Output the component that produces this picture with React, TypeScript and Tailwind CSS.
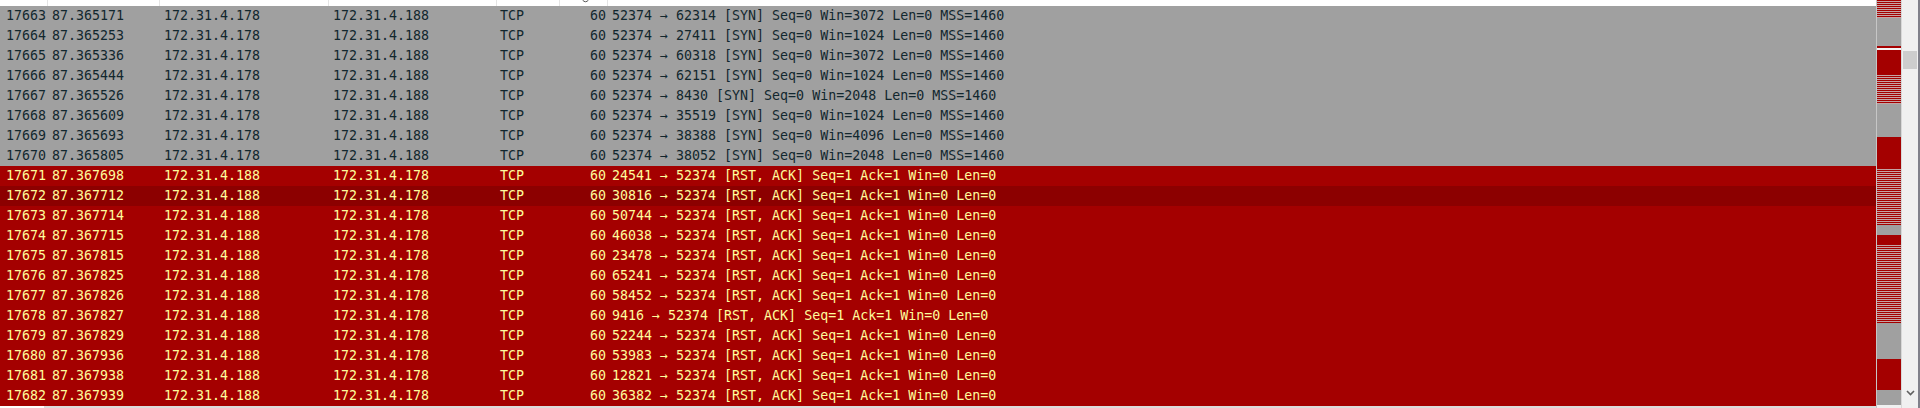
import React from "react";

type Pkt = { no: number; time: string; src: string; dst: string; info: string; kind: "syn" | "rst" | "sel" };

const SYN: [number, string, string, string][] = [
  [17663, "87.365171", "62314", "3072"],
  [17664, "87.365253", "27411", "1024"],
  [17665, "87.365336", "60318", "3072"],
  [17666, "87.365444", "62151", "1024"],
  [17667, "87.365526", "8430", "2048"],
  [17668, "87.365609", "35519", "1024"],
  [17669, "87.365693", "38388", "4096"],
  [17670, "87.365805", "38052", "2048"],
];

const RST: [number, string, string][] = [
  [17671, "87.367698", "24541"],
  [17672, "87.367712", "30816"],
  [17673, "87.367714", "50744"],
  [17674, "87.367715", "46038"],
  [17675, "87.367815", "23478"],
  [17676, "87.367825", "65241"],
  [17677, "87.367826", "58452"],
  [17678, "87.367827", "9416"],
  [17679, "87.367829", "52244"],
  [17680, "87.367936", "53983"],
  [17681, "87.367938", "12821"],
  [17682, "87.367939", "36382"],
];

const packets: Pkt[] = [
  ...SYN.map(([no, time, port, win]) => ({
    no,
    time,
    src: "172.31.4.178",
    dst: "172.31.4.188",
    info: `52374 → ${port} [SYN] Seq=0 Win=${win} Len=0 MSS=1460`,
    kind: "syn" as const,
  })),
  ...RST.map(([no, time, port]) => ({
    no,
    time,
    src: "172.31.4.188",
    dst: "172.31.4.178",
    info: `${port} → 52374 [RST, ACK] Seq=1 Ack=1 Win=0 Len=0`,
    kind: (no === 17672 ? "sel" : "rst") as "sel" | "rst",
  })),
];

const rowCls = {
  syn: "bg-[#a0a0a0] text-[#12272e]",
  rst: "bg-[#a40000] text-[#fffc9c]",
  sel: "bg-[#8c0000] text-[#fffc9c]",
};

const cols = "grid grid-cols-[48px_112px_169px_168px_63px_48px_1fr]";

// minimap segments: [top, bottom, type]
const mini: [number, number, "s" | "g" | "r" | "w"][] = [
  [0, 18, "s"],
  [18, 46, "g"],
  [46, 48, "r"],
  [48, 50, "w"],
  [50, 74, "r"],
  [74, 104, "s"],
  [104, 137, "g"],
  [137, 169, "r"],
  [169, 225, "s"],
  [225, 235, "g"],
  [235, 245, "r"],
  [245, 323, "s"],
  [323, 359, "g"],
  [359, 390, "r"],
  [390, 405, "g"],
];

function MiniMap() {
  return (
    <svg width="24" height="408" className="block">
      <defs>
        <pattern id="stripe" width="24" height="2" patternUnits="userSpaceOnUse">
          <rect width="24" height="1" fill="#a40000" />
          <rect y="1" width="24" height="1" fill="#c4a4a4" />
        </pattern>
      </defs>
      <rect width="24" height="408" fill="#f0f0f0" />
      {mini.map(([a, b, t]) => (
        <rect
          key={a}
          y={a}
          width="24"
          height={b - a}
          fill={t === "s" ? "url(#stripe)" : t === "g" ? "#a0a0a0" : t === "r" ? "#a40000" : "#f4f4f4"}
        />
      ))}
    </svg>
  );
}

export default function App() {
  return (
    <div className="flex h-[408px] w-[1920px] overflow-hidden bg-white font-['DejaVu_Sans_Mono',monospace] text-[13.3px] leading-[20px]">
      <div className="flex w-[1876px] flex-col">
        <div className={`${cols} h-[6px] bg-white`}>
          <div className="border-r border-[#e5e5e5]" />
          <div className="border-r border-[#e5e5e5]" />
          <div className="border-r border-[#e5e5e5]" />
          <div className="border-r border-[#e5e5e5]" />
          <div className="border-r border-[#e5e5e5]" />
          <div className="relative border-r border-[#e5e5e5]">
            <svg width="7" height="3" className="absolute left-[22px] top-0">
              <path d="M0.5 0 Q3.5 3.5 6.5 0" stroke="#555" strokeWidth="1" fill="none" />
            </svg>
          </div>
          <div />
        </div>
        {packets.map((p) => (
          <div key={p.no} className={`${cols} h-[20px] whitespace-pre ${rowCls[p.kind]}`}>
            <div className="pr-[2px] text-right">{p.no}</div>
            <div className="pl-[4px]">{p.time}</div>
            <div className="pl-[4px]">{p.src}</div>
            <div className="pl-[4px]">{p.dst}</div>
            <div className="pl-[3px]">TCP</div>
            <div className="pr-[2px] text-right">60</div>
            <div className="pl-[4px]">{p.info}</div>
          </div>
        ))}
        <div className="flex h-[2px]">
          <div className="w-[44px] bg-white" />
          <div className="flex-1 bg-[#dcdcdc]" />
        </div>
      </div>
      <div className="w-px bg-[#c6c6c6]" />
      <MiniMap />
      <div className="w-px bg-[#d8d8d8]" />
      <div className="flex w-[16px] flex-col bg-[#f0f0f0]">
        <div className="h-[51px]" />
        <div className="mx-px h-[18px] bg-[#cdcdcd]" />
        <div className="flex-1" />
        <div className="flex h-[20px] items-start justify-center pt-[2px]">
          <svg width="9" height="6" viewBox="0 0 9 6">
            <path d="M1 1 L4.5 4.5 L8 1" stroke="#606060" strokeWidth="1.6" fill="none" />
          </svg>
        </div>
      </div>
      <div className="w-[2px] bg-[#80808a]" />
    </div>
  );
}
